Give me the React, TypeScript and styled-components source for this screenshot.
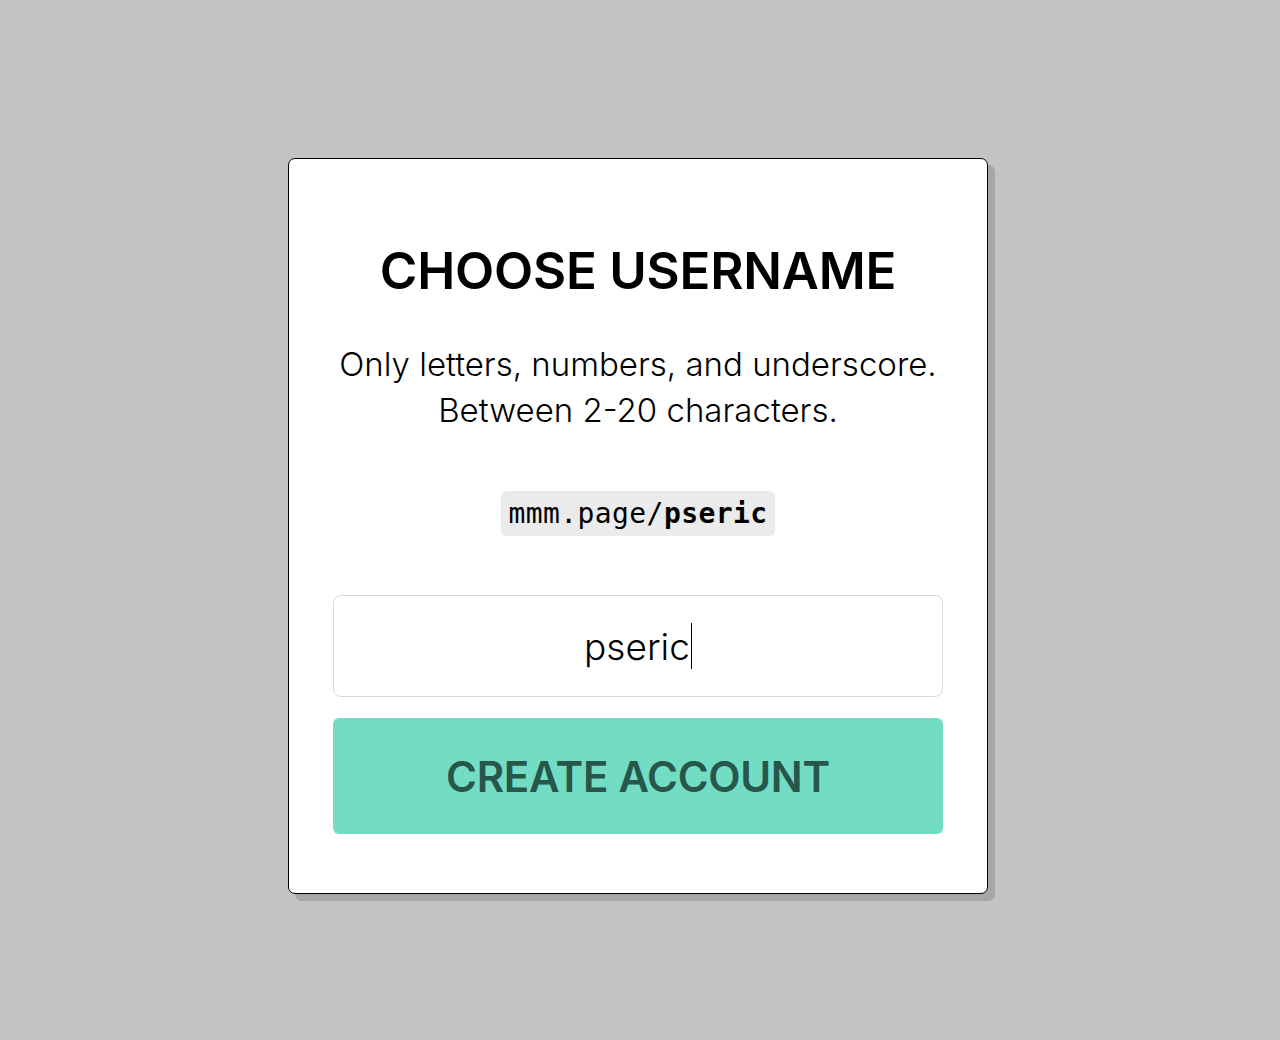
import React from "react";
import styled, { createGlobalStyle } from "styled-components";

const Global = createGlobalStyle`
  html, body { margin: 0; padding: 0; background: #c3c3c3; }
  body { font-family: Inter, "Noto Sans", sans-serif; color: #000; }
`;

const Page = styled.div`
  min-height: 1040px;
  display: flex;
  justify-content: center;
  align-items: flex-start;
  padding: 158px 4px 0 0;
  box-sizing: border-box;
`;

const Card = styled.div`
  width: 700px;
  height: 736px;
  box-sizing: border-box;
  background: #fff;
  border: 1px solid #000;
  border-radius: 7px;
  box-shadow: 7px 7px 0 #a6a6a6;
  padding: 76px 44px 0;
  display: flex;
  flex-direction: column;
  align-items: center;
`;

const Title = styled.h1`
  margin: 0;
  font-family: Inter, sans-serif;
  font-size: 51px;
  font-weight: 600;
  line-height: 72px;
  letter-spacing: -0.2px;
  text-align: center;
`;

const Hint = styled.p`
  margin: 34px 0 0;
  font-family: Inter, sans-serif;
  font-size: 33px;
  font-weight: 300;
  line-height: 46px;
  text-align: center;
`;

const UrlBadge = styled.div`
  margin-top: 58px;
  background: #ebebeb;
  border-radius: 6px;
  padding: 0 8px;
  height: 45px;
  display: flex;
  align-items: center;
  font-family: "DejaVu Sans Mono", "Liberation Mono", monospace;
  font-size: 28px;
  font-weight: 300;
  letter-spacing: 0.4px;
`;

const Bold = styled.span`
  font-weight: 700;
`;

const Field = styled.div`
  margin-top: 59px;
  width: 100%;
  height: 102px;
  box-sizing: border-box;
  border: 1px solid #d9d9d9;
  border-radius: 8px;
  display: flex;
  align-items: center;
  justify-content: center;
  font-family: Inter, sans-serif;
  font-size: 37px;
  font-weight: 300;
`;

const Caret = styled.span`
  display: inline-block;
  width: 1px;
  height: 46px;
  background: #000;
  margin-left: 1px;
`;

const Button = styled.button`
  margin-top: 21px;
  width: 100%;
  height: 116px;
  border: none;
  border-radius: 6px;
  background: #72ddc4;
  color: #27574a;
  font-family: Inter, sans-serif;
  font-size: 42px;
  font-weight: 600;
  letter-spacing: -0.3px;
  cursor: pointer;
`;

export default function App() {
  return (
    <>
      <Global />
      <Page>
        <Card>
          <Title>CHOOSE USERNAME</Title>
          <Hint>
            Only letters, numbers, and underscore.
            <br />
            Between 2-20 characters.
          </Hint>
          <UrlBadge>
            mmm.page/<Bold>pseric</Bold>
          </UrlBadge>
          <Field>
            pseric
            <Caret />
          </Field>
          <Button>CREATE ACCOUNT</Button>
        </Card>
      </Page>
    </>
  );
}
